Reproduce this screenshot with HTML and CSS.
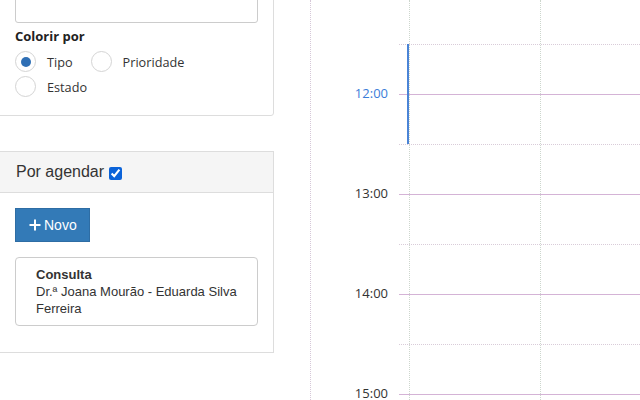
FILE: index.html
```html
<!DOCTYPE html>
<html lang="pt">
<head>
<meta charset="utf-8">
<title>Agenda</title>
<link rel="stylesheet" href="styles.css">
</head>
<body>
<div class="page">
  <aside class="sidebar">
    <section class="panel panel-filters">
      <div class="textarea"></div>
      <div class="field-label">Colorir por</div>
      <div class="radios">
        <label class="radio"><span class="radio-circle checked"></span>Tipo</label>
        <label class="radio"><span class="radio-circle"></span>Prioridade</label>
        <label class="radio"><span class="radio-circle"></span>Estado</label>
      </div>
    </section>
    <section class="panel panel-agenda">
      <header class="panel-heading">Por agendar <input class="check" type="checkbox" checked></header>
      <div class="panel-body">
        <button class="btn"><svg class="plus" viewBox="0 0 12 12" width="12" height="12"><path d="M6 0.5v11M0.5 6h11" stroke="#fff" stroke-width="2"/></svg>Novo</button>
        <div class="card">
          <div class="card-title">Consulta</div>
          <div class="card-text">Dr.ª Joana Mourão - Eduarda Silva Ferreira</div>
        </div>
      </div>
    </section>
  </aside>
  <main class="calendar">
    <div class="axis">
      <div class="axis-spacer"></div>
      <div class="axis-label current">12:00</div>
      <div class="axis-label">13:00</div>
      <div class="axis-label">14:00</div>
      <div class="axis-label">15:00</div>
    </div>
    <div class="slots">
      <div class="slot slot-top"><span class="gutter"></span><span class="day"></span><span class="day day-last"></span></div>
      <div class="slot half"><span class="gutter"></span><span class="day"></span><span class="day day-last"></span></div>
      <div class="slot hour"><span class="gutter"></span><span class="day"></span><span class="day day-last"></span></div>
      <div class="slot half"><span class="gutter"></span><span class="day"></span><span class="day day-last"></span></div>
      <div class="slot hour"><span class="gutter"></span><span class="day"></span><span class="day day-last"></span></div>
      <div class="slot half"><span class="gutter"></span><span class="day"></span><span class="day day-last"></span></div>
      <div class="slot hour"><span class="gutter"></span><span class="day"></span><span class="day day-last"></span></div>
      <div class="slot half"><span class="gutter"></span><span class="day"></span><span class="day day-last"></span></div>
      <div class="slot hour"><span class="gutter"></span><span class="day"></span><span class="day day-last"></span></div>
      <div class="now-bar"></div>
    </div>
  </main>
</div>
</body>
</html>
```
FILE: styles.css
```css
* { box-sizing: border-box; }
html, body { margin: 0; padding: 0; background: #fff; }
body { width: 640px; height: 400px; overflow: hidden; color: #333; font-family: "Liberation Sans", Arial, sans-serif; }

.page { display: flex; align-items: flex-start; height: 400px; }

.sidebar { width: 274px; flex: none; }

.panel {
  width: 275px;
  margin-left: -1px;
  border: 1px solid #ddd;
  background: #fff;
}

.panel-filters {
  margin-top: -40px;
  padding: 15px 15px 18px;
  border-radius: 0 0 3px 0;
}

.textarea {
  height: 47px;
  border: 1px solid #ccc;
  border-radius: 0 0 3px 3px;
}

.field-label {
  margin-top: 4px;
  font-family: "Open Sans", "Noto Sans", sans-serif;
  font-weight: 700;
  font-size: 13px;
  line-height: 18px;
  color: #222;
}

.radios {
  display: flex;
  flex-wrap: wrap;
  width: 200px;
  margin-top: 6px;
  row-gap: 4px;
  column-gap: 18px;
  font-family: "Open Sans", "Noto Sans", sans-serif;
  font-size: 12.7px;
  color: #333;
}

.radio { display: flex; align-items: center; height: 21px; }

.radio-circle {
  width: 21px;
  height: 21px;
  border: 1px solid #d4d4d4;
  border-radius: 50%;
  margin-right: 11px;
  display: flex;
  align-items: center;
  justify-content: center;
}
.radio-circle.checked::after {
  content: "";
  width: 10px;
  height: 10px;
  border-radius: 50%;
  background: #2f6fb5;
}

.panel-agenda { margin-top: 35px; }

.panel-heading {
  height: 41px;
  display: flex;
  align-items: center;
  padding: 0 16px;
  background: #f5f5f5;
  border-bottom: 1px solid #ddd;
  font-size: 16px;
  color: #333;
}
.check {
  width: 13px;
  height: 13px;
  margin: 2px 0 0 5px;
  accent-color: #0b63d9;
}

.panel-body { padding: 15px 15px 26px; }

.btn {
  display: flex;
  align-items: center;
  height: 34px;
  padding: 0 12px 0 13px;
  border: 1px solid #2e6da4;
  border-radius: 0;
  background: #337ab7;
  color: #fff;
  font-family: "Liberation Sans", Arial, sans-serif;
  font-size: 14px;
}
.plus { margin-right: 3px; }

.card {
  margin-top: 15px;
  padding: 8px 18px 8px 20px;
  border: 1px solid #ccc;
  border-radius: 4px;
  font-size: 13px;
  line-height: 17px;
  color: #333;
}
.card-title { font-weight: 700; }

.calendar {
  display: flex;
  margin-left: 36px;
  height: 400px;
  flex: 1;
  border-left: 1px dotted #d6c8d8;
  overflow: hidden;
}

.axis { width: 88px; flex: none; }
.axis-spacer { height: 43px; }
.axis-label {
  height: 100px;
  display: flex;
  align-items: center;
  justify-content: flex-end;
  padding-right: 11px;
  font-family: "Open Sans", "Noto Sans", sans-serif;
  font-size: 13px;
  color: #333;
}
.axis-label.current { color: #3b7dd8; }

.slots { flex: 1; position: relative; }

.slot { display: flex; height: 50px; }
.slot-top { height: 44px; }
.slot.half { border-top: 1px dotted #d9ccd9; }
.slot.hour { border-top: 1px solid #d4b3d6; }

.gutter { width: 10px; flex: none; }
.day { width: 131px; flex: none; border-left: 1px dotted #cdd6cd; }
.day-last { flex: 1; width: auto; }

.now-bar {
  position: absolute;
  left: 8px;
  top: 44px;
  width: 2px;
  height: 100px;
  background: #4a84d6;
}
```
